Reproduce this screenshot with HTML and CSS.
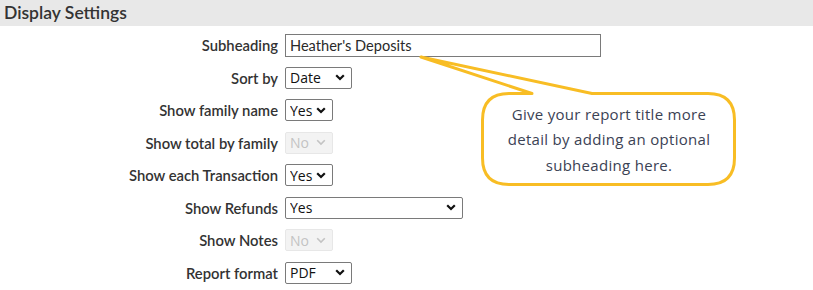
FILE: index.html
```html
<!DOCTYPE html>
<html lang="en">
<head>
  <meta charset="UTF-8">
  <title>Display Settings</title>
  <link rel="stylesheet" href="styles.css">
</head>
<body>

  <h2 class="section-title">Display Settings</h2>

  <form class="settings" id="displaySettings">
    <label for="subheading">Subheading</label>
    <div class="field">
      <input type="text" id="subheading" class="text-input" value="Heather's Deposits">
      <div class="callout">
        <svg class="callout-shape" width="325" height="140" viewBox="0 0 325 140">
          <path d="M117 43.5 L6 7 L177 43.5 L293 43.5 Q319.5 43.5 319.5 70 L319.5 108 Q319.5 134.5 293 134.5 L94 134.5 Q67.5 134.5 67.5 108 L67.5 70 Q67.5 43.5 94 43.5 Z" />
        </svg>
        <p class="callout-text">Give your report title more<br>detail by adding an optional<br>subheading here.</p>
      </div>
    </div>

    <label for="sortBy">Sort by</label>
    <div class="field">
      <select id="sortBy" class="sel sel-date">
        <option>Date</option>
        <option>Name</option>
      </select>
    </div>

    <label for="familyName">Show family name</label>
    <div class="field">
      <select id="familyName" class="sel sel-yn">
        <option>Yes</option>
        <option>No</option>
      </select>
    </div>

    <label for="totalFamily">Show total by family</label>
    <div class="field">
      <select id="totalFamily" class="sel sel-yn" disabled>
        <option>No</option>
      </select>
    </div>

    <label for="eachTrans">Show each Transaction</label>
    <div class="field">
      <select id="eachTrans" class="sel sel-yn">
        <option>Yes</option>
        <option>No</option>
      </select>
    </div>

    <label for="refunds">Show Refunds</label>
    <div class="field">
      <select id="refunds" class="sel sel-wide">
        <option>Yes</option>
        <option>No</option>
      </select>
    </div>

    <label for="notes">Show Notes</label>
    <div class="field">
      <select id="notes" class="sel sel-yn" disabled>
        <option>No</option>
      </select>
    </div>

    <label for="format">Report format</label>
    <div class="field">
      <select id="format" class="sel sel-date">
        <option>PDF</option>
        <option>Excel</option>
      </select>
    </div>
  </form>

</body>
</html>
```

FILE: styles.css
```css
* {
  box-sizing: border-box;
}

body {
  margin: 0;
  font-family: 'Lato', sans-serif;
  color: #333;
  background: #fff;
}

.section-title {
  margin: 0;
  height: 26px;
  line-height: 26px;
  padding-left: 4px;
  background: #e8e8e8;
  font-size: 17.5px;
  font-weight: 600;
  color: #333;
}

.settings {
  display: grid;
  grid-template-columns: 278px auto;
  column-gap: 7px;
  row-gap: 10.5px;
  align-items: center;
  padding-top: 8px;
}

.settings label {
  text-align: right;
  font-size: 14.8px;
  font-weight: 600;
  color: #333;
}

.field {
  position: relative;
  display: flex;
  align-items: center;
  height: 22px;
}

.text-input {
  width: 316px;
  height: 23px;
  padding: 0 4px;
  border: 1px solid #7a7a7a;
  border-radius: 0;
  font-family: 'Lato', sans-serif;
  font-size: 14.6px;
  color: #2a2a2a;
}

.sel {
  appearance: none;
  -webkit-appearance: none;
  height: 22px;
  padding: 0 0 0 4px;
  border: 1px solid #7a7a7a;
  border-radius: 2px;
  background: #fff url("data:image/svg+xml,%3Csvg xmlns='http://www.w3.org/2000/svg' width='10' height='7' viewBox='0 0 10 7'%3E%3Cpath d='M1.2 1.2 L5 5 L8.8 1.2' fill='none' stroke='%23111' stroke-width='2.2'/%3E%3C/svg%3E") no-repeat right 6px center;
  font-family: 'Open Sans', sans-serif;
  font-size: 14px;
  color: #111;
}

.sel:disabled {
  background-color: #efefef;
  background-image: url("data:image/svg+xml,%3Csvg xmlns='http://www.w3.org/2000/svg' width='10' height='7' viewBox='0 0 10 7'%3E%3Cpath d='M1.2 1.2 L5 5 L8.8 1.2' fill='none' stroke='%23aaa' stroke-width='1.6'/%3E%3C/svg%3E");
  border-color: #ddd;
  color: #aaa;
}

.sel-date {
  width: 67px;
}

.sel-yn {
  width: 48px;
}

.sel-wide {
  width: 178px;
}

.callout {
  position: absolute;
  left: 130px;
  top: 16px;
  width: 325px;
  height: 140px;
}

.callout-shape {
  display: block;
}

.callout-shape path {
  fill: #fff;
  stroke: #f8bd24;
  stroke-width: 3;
  stroke-linejoin: round;
}

.callout-text {
  position: absolute;
  left: 69px;
  top: 44px;
  width: 250px;
  height: 90px;
  margin: 0;
  padding-top: 7.5px;
  text-align: center;
  font-family: 'Open Sans', sans-serif;
  font-size: 15px;
  letter-spacing: 0.3px;
  line-height: 25.5px;
  color: #3b4254;
}
```
